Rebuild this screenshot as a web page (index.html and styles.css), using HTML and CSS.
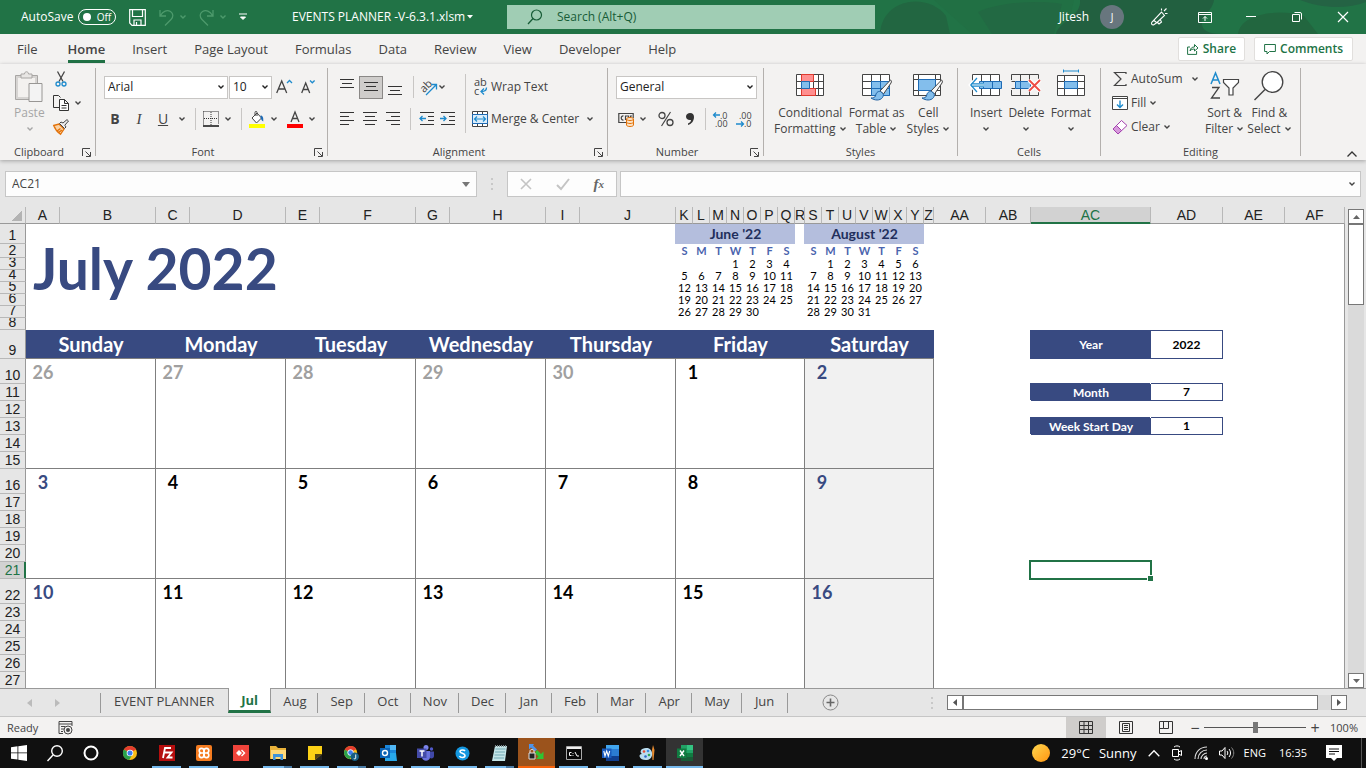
FILE: index.html
```html
<!DOCTYPE html>
<html lang="en">
<head>
<meta charset="utf-8">
<title>EVENTS PLANNER -V-6.3.1.xlsm</title>
<link rel="stylesheet" href="styles.css">
</head>
<body>
<svg class="defs" aria-hidden="true">
  <symbol id="chev" viewBox="0 0 8 8"><path d="M1.5 2.5 4 5l2.500-2.500" fill="none" stroke="currentColor" stroke-width="1.400"/></symbol>
  <symbol id="launch" viewBox="0 0 9 9"><path d="M.5 8V.5H8M3.500 3.500l4.500 4.500M8.500 4v4.500H4" fill="none" stroke="#444"/></symbol>
  <symbol id="brush" viewBox="0 0 24 24"><path d="M22 2.500 12 13l3.500 3L23 5c1-2 0-3.500-1-2.500Z" fill="#f8f8f8" stroke="#444"/><path d="M12.500 13.500c-3-.5-4.500 1.500-5 4.500-.5 1.500-2.500 2-4.500 2 3.500 2.500 9 3 11.500-.5 1-1.500 1-3 .5-4Z" fill="#83beec" stroke="#1e5fa0"/></symbol>
</svg>
<header class="titlebar">
  <svg class="blobs" viewBox="0 0 486 34" preserveAspectRatio="none" aria-hidden="true"><path d="M0 34C2-2 48-8 66 16l4 18Z" fill="#226641"/><path d="M54 0h140l-8 34H92Z" fill="#217044"/><path d="M98 12c22-10 60-12 84-8l-8 30H112Z" fill="#226943"/><path d="M200 0h134c-2 12-12 14-12 24 0 6 6 10 20 10H176c2-12 26-18 24-34Z" fill="#226040"/><path d="M358 34c2-20 40-26 66-18l14 18Z" fill="#22663f"/><path d="M420 0c20 8 46 10 66 2V0Z" fill="#246344"/></svg>
  <div class="title-left">
    <label class="autosave" for="autosave">AutoSave</label>
    <button class="toggle" id="autosave" role="switch" aria-checked="false"><i></i>Off</button>
    <button class="tb save" aria-label="Save"><svg width="17" height="17" viewBox="0 0 17 17"><path d="M.7.7h15.600v15.600H3L.7 14ZM3.500.7v6.800h10V.7M5 16v-5h7v5M7.500 13v3" fill="none" stroke="#fff" stroke-width="1.200"/></svg></button>
    <button class="tb undo dim" aria-label="Undo"><svg width="15" height="17" viewBox="0 0 15 17"><path d="M1 1v6h6M1.500 6.500C4 2 8 .5 11.500 2.500c3 2 3 5.500.5 8L6 16.500" fill="none" stroke="currentColor" stroke-width="1.300"/></svg></button>
    <svg class="chev dim"><use href="#chev"/></svg>
    <button class="tb undo dim" aria-label="Redo"><svg width="15" height="17" viewBox="0 0 15 17"><path d="M14 1v6H8M13.500 6.500C11 2 7 .5 3.500 2.500c-3 2-3 5.500-.5 8l6 6" fill="none" stroke="currentColor" stroke-width="1.300"/></svg></button>
    <svg class="chev dim"><use href="#chev"/></svg>
    <button class="tb custom" aria-label="Customize toolbar"><svg width="8" height="8" viewBox="0 0 8 8"><path d="M0 1h8" stroke="#fff"/><path d="M1.500 4h5L4 6.500Z" fill="#fff" stroke="#fff"/></svg></button>
    <span class="docname">EVENTS PLANNER -V-6.3.1.xlsm</span>
    <svg class="caret" width="6" height="4" viewBox="0 0 6 4"><path d="M0 0h6L3 3.500Z" fill="#fff"/></svg>
  </div>
  <div class="search">
    <svg width="16" height="16" viewBox="0 0 16 16"><circle cx="9.500" cy="6" r="5" fill="none" stroke="#185c37" stroke-width="1.200"/><path d="M6 9.500 1 15" stroke="#185c37" stroke-width="1.300"/></svg>
    <input type="text" aria-label="Search" placeholder="Search (Alt+Q)">
  </div>
  <div class="title-right">
    <span class="user">Jitesh</span><span class="avatar">J</span>
    <button class="wb" aria-label="Coming soon"><svg width="18" height="18" viewBox="0 0 18 18"><path d="M11.500 4 14.500 7.500 7 14.500 3.500 17c-2 0-2.500-1.500-1.500-3ZM3.500 12l3.500 3M7.500 14.500l1.500 1.500 2.500-2-1-2M11.500.5v2M14 3l2.500-2.500M15 5.500h2.500" fill="none" stroke="#fff" stroke-width="1.100"/></svg></button>
    <button class="wb" aria-label="Ribbon display options"><svg width="14" height="11" viewBox="0 0 14 11"><path d="M.5.5h13v10H.5ZM.5 2.500h13M7 9V4.500M5 6.500l2-2 2 2" fill="none" stroke="#fff"/></svg></button>
    <button class="wb" aria-label="Minimize"><svg width="10" height="10" viewBox="0 0 10 10"><path d="M0 4.500h10" stroke="#fff"/></svg></button>
    <button class="wb" aria-label="Restore"><svg width="10" height="10" viewBox="0 0 10 10"><path d="M.5 2.500h7v7h-7ZM2.500.5H8q1.500 0 1.500 1.500v5.500" fill="none" stroke="#fff"/></svg></button>
    <button class="wb" aria-label="Close"><svg width="10" height="10" viewBox="0 0 10 10"><path d="m0 0 10 10M10 0 0 10" stroke="#fff" stroke-width="1.200"/></svg></button>
  </div>
</header>

<nav class="tabs">
  <a href="#file">File</a><a class="on" href="#home">Home</a><a href="#insert">Insert</a><a href="#layout">Page Layout</a><a href="#formulas">Formulas</a><a href="#data">Data</a><a href="#review">Review</a><a href="#view">View</a><a href="#developer">Developer</a><a href="#help">Help</a>
  <span class="grow"></span>
  <button class="pill"><svg width="12" height="12" viewBox="0 0 12 12"><path d="M3 4H.6v7.400h9V8M3 8c.5-3 2-4 4.500-4V1.500L11 5 7.500 8V6C5.500 6 4 6.500 3 8Z" fill="none" stroke="#217346"/></svg>Share</button>
  <button class="pill"><svg width="12" height="12" viewBox="0 0 12 12"><path d="M.6 1.500h10.800v7H5.500L3 11V8.500H.6Z" fill="none" stroke="#217346"/></svg>Comments</button>
</nav>

<section class="ribbon">
  <div class="group clipboard">
    <div class="body">
      <button class="big paste"><svg width="28" height="32" viewBox="0 0 28 32"><path d="M.5 4.500h22v24H.5Z" fill="#d6d4d2" stroke="#a8a6a4"/><path d="M3 7h17v19H3Z" fill="#f3f1ef"/><path d="M6 3h3.500c0-3 4-3 4 0H17v4H6Z" fill="#e8e6e4" stroke="#a8a6a4"/><path d="M14 12.500h13v18H14Z" fill="#f3f3f3" stroke="#989694"/></svg><span>Paste</span><svg class="chev"><use href="#chev"/></svg></button>
      <div class="stack">
        <button class="line" aria-label="Cut"><svg width="16" height="16" viewBox="0 0 16 16"><path d="m4.500.5 5.500 10M11.500.5 6 10.500" stroke="#444" stroke-width="1.300"/><circle cx="5" cy="13" r="2" fill="none" stroke="#1e8bcd" stroke-width="1.300"/><circle cx="11" cy="13" r="2" fill="none" stroke="#1e8bcd" stroke-width="1.300"/></svg></button>
        <button class="line" aria-label="Copy"><svg width="16" height="16" viewBox="0 0 16 16"><path d="M6 12.500H.5V.5h5l2 2" fill="none" stroke="#333"/><path d="M6.500 4.500h5l4 4v7h-9ZM11.500 4.500v4h4M8.500 10.500h5M8.500 13h5" fill="#fff" stroke="#333"/></svg><svg class="chev"><use href="#chev"/></svg></button>
        <button class="line" aria-label="Format painter"><svg width="16" height="16" viewBox="0 0 16 16"><path d="M.7 6.500 6 5l5 5-3.500 5.300C5 13.500 2 10 .7 6.500Z" fill="#fbd3a6" stroke="#e3730b" stroke-width="1.300"/><path d="M4 12l3.500-2.500M5.500 13.500 9 11" stroke="#e3730b" stroke-width="1.500" fill="none"/><path d="m6.500 4.500 5 5L13 8l-1.200-1.800 3.700-4.200L14 .6 10 4 8 3Z" fill="#eee" stroke="#444"/></svg></button>
      </div>
    </div>
    <div class="cap"><span>Clipboard</span><button class="launch" aria-label="Clipboard options"><svg width="9" height="9"><use href="#launch"/></svg></button></div>
  </div>

  <div class="group font">
    <div class="body rows">
      <div class="row">
        <div class="pick wide"><select aria-label="Font"><option>Arial</option></select><svg class="chev"><use href="#chev"/></svg></div>
        <div class="pick size"><select aria-label="Font size"><option>10</option></select><svg class="chev"><use href="#chev"/></svg></div>
        <button class="ib" aria-label="Increase font size"><svg width="17" height="16" viewBox="0 0 17 16"><path d="M.7 14 5.700 2l5 12M2.500 10h6.500" fill="none" stroke="#444" stroke-width="1.300"/><path d="m11 4 2.500-2.500L16 4" fill="none" stroke="#1e8bcd" stroke-width="1.300"/></svg></button>
        <button class="ib" aria-label="Decrease font size"><svg width="16" height="16" viewBox="0 0 16 16"><path d="m1.700 14 4-10 4 10M3.200 10.500h5" fill="none" stroke="#444" stroke-width="1.300"/><path d="m10 1.500 2.300 2.300 2.300-2.300" fill="none" stroke="#1e8bcd" stroke-width="1.300"/></svg></button>
      </div>
      <div class="row">
        <button class="ib b">B</button><button class="ib i">I</button><button class="ib u">U</button><button class="cv" aria-label="Underline options"><svg class="chev"><use href="#chev"/></svg></button><i class="sep"></i>
        <button class="sb" aria-label="Borders"><svg width="16" height="16" viewBox="0 0 16 16"><path d="M.5.5h15v13M.5.5v13M8 1v13M1 7.500h14" fill="none" stroke="#333" stroke-dasharray="1 1"/><path d="M0 15h16" stroke="#111" stroke-width="1.500"/></svg></button><button class="cv" aria-label="Border options"><svg class="chev"><use href="#chev"/></svg></button><i class="sep"></i>
        <button class="sb" aria-label="Fill color"><svg width="16" height="17" viewBox="0 0 16 17"><path d="m3 7 5-5 4.500 5-5 5ZM8 5V1.500c0-1.500-2-1.500-2 0V5" fill="#fff" stroke="#444"/><path d="M11.500 4.500c2.500 0 3 2.500 2.700 6-2-1-2.700-3-2.700-6Z" fill="#1e6bb5"/><path d="M0 13h16v4H0Z" fill="#ff0"/></svg></button><button class="cv" aria-label="Fill options"><svg class="chev"><use href="#chev"/></svg></button>
        <button class="sb" aria-label="Font color"><svg width="16" height="17" viewBox="0 0 16 17"><path d="m4 11 4-10 4 10M5.500 7.500h5" fill="none" stroke="#444" stroke-width="1.300"/><path d="M0 13h16v4H0Z" fill="#f00"/></svg></button><button class="cv" aria-label="Font color options"><svg class="chev"><use href="#chev"/></svg></button>
      </div>
    </div>
    <div class="cap"><span>Font</span><button class="launch" aria-label="Font options"><svg width="9" height="9"><use href="#launch"/></svg></button></div>
  </div>

  <div class="group align">
    <div class="body">
      <div class="rows">
        <div class="row">
          <button class="ib" aria-label="Top align"><svg width="14" height="16" viewBox="0 0 14 16"><path d="M0 .5h14M2 4.500h10M0 8.500h14" stroke="#333"/></svg></button>
          <button class="ib pressed" aria-label="Middle align"><svg width="14" height="16" viewBox="0 0 14 16"><path d="M0 3.500h14M2 7.500h10M0 11.500h14" stroke="#333"/></svg></button>
          <button class="ib" aria-label="Bottom align"><svg width="14" height="16" viewBox="0 0 14 16"><path d="M0 7.500h14M2 11.500h10M0 15.500h14" stroke="#333"/></svg></button>
          <i class="sep"></i>
          <button class="sb" aria-label="Orientation"><svg width="17" height="17" viewBox="0 0 17 17"><text x="-1" y="11" transform="rotate(-45 5 8)" font-family="Open Sans" font-size="11" fill="#444">ab</text><path d="m5 16 10-10M10.500 5.500H15.500v5" fill="none" stroke="#1e8bcd" stroke-width="1.300"/></svg></button><button class="cv" aria-label="Orientation options"><svg class="chev"><use href="#chev"/></svg></button>
        </div>
        <div class="row">
          <button class="ib" aria-label="Align left"><svg width="14" height="14" viewBox="0 0 14 14"><path d="M0 .5h14M0 4.500h9M0 8.500h14M0 12.500h9" stroke="#333"/></svg></button>
          <button class="ib" aria-label="Center"><svg width="14" height="14" viewBox="0 0 14 14"><path d="M0 .5h14M2 4.500h10M0 8.500h14M2 12.500h10" stroke="#333"/></svg></button>
          <button class="ib" aria-label="Align right"><svg width="14" height="14" viewBox="0 0 14 14"><path d="M0 .5h14M5 4.500h9M0 8.500h14M5 12.500h9" stroke="#333"/></svg></button>
          <i class="sep"></i>
          <button class="sb" aria-label="Decrease indent"><svg width="15" height="14" viewBox="0 0 15 14"><path d="M1 .5h14M9 4.500h6M9 8.500h6M1 12.500h14" stroke="#333"/><path d="M7 6.500H1M3.500 4 1 6.500 3.500 9" fill="none" stroke="#1e8bcd" stroke-width="1.300"/></svg></button>
          <button class="ib" aria-label="Increase indent"><svg width="15" height="14" viewBox="0 0 15 14"><path d="M1 .5h14M9 4.500h6M9 8.500h6M1 12.500h14" stroke="#333"/><path d="M0 6.500h6M3.500 4 6 6.500 3.500 9" fill="none" stroke="#1e8bcd" stroke-width="1.300"/></svg></button>
        </div>
      </div>
      <i class="sep tall"></i>
      <div class="rows">
        <div class="row"><button class="txt"><svg width="16" height="18" viewBox="0 0 16 18"><text x="2" y="8" font-family="Open Sans" font-size="11" fill="#444">ab</text><text x="2" y="17" font-family="Open Sans" font-size="11" fill="#444">c</text><path d="M14.500 9.500c0 3-2 4-5 4M12 10.500l-3 3 3 3" fill="none" stroke="#1e8bcd" stroke-width="1.300"/></svg>Wrap Text</button></div>
        <div class="row"><button class="txt"><svg width="16" height="16" viewBox="0 0 16 16"><path d="M.5.5h15v15H.5ZM5.500.5v3M10.500.5v3M5.500 13v2.500M10.500 13v2.500" fill="#fff" stroke="#444"/><path d="M.5 3.500h15v9H.5Z" fill="#dcedfa" stroke="#1e6bb5"/><path d="M3 8h10M5 5.500 2.500 8 5 10.500M11 5.500 13.500 8 11 10.500" fill="none" stroke="#1e8bcd" stroke-width="1.200"/></svg>Merge &amp; Center</button><button class="cv" aria-label="Merge options"><svg class="chev"><use href="#chev"/></svg></button></div>
      </div>
    </div>
    <div class="cap"><span>Alignment</span><button class="launch" aria-label="Alignment options"><svg width="9" height="9"><use href="#launch"/></svg></button></div>
  </div>

  <div class="group number">
    <div class="body rows">
      <div class="row"><div class="pick"><select aria-label="Number format"><option>General</option></select><svg class="chev"><use href="#chev"/></svg></div></div>
      <div class="row">
        <button class="sb" aria-label="Accounting format"><svg width="17" height="16" viewBox="0 0 17 16"><path d="M8 11.500H.8v-9h14.400V7M5.500 5c-3-.5-3 4.500 0 4M7.500 9V5h3v4M12.500 7V5H14" fill="none" stroke="#444" stroke-width="1.200"/><path d="M8.500 8v6c0 2 7 2 7 0V8c0-2-7-2-7 0Z" fill="#fce2c4" stroke="#e3730b"/><path d="M8.500 8c0 2 7 2 7 0M8.500 11c0 2 7 2 7 0" fill="none" stroke="#e3730b"/></svg></button><button class="cv" aria-label="Accounting options"><svg class="chev"><use href="#chev"/></svg></button>
        <button class="ib pc" aria-label="Percent"><svg width="16" height="16" viewBox="0 0 16 16"><circle cx="4" cy="4.500" r="3" fill="none" stroke="#444" stroke-width="1.300"/><circle cx="12" cy="11.500" r="3" fill="none" stroke="#444" stroke-width="1.300"/><path d="M12.500 1 3.500 15" stroke="#444" stroke-width="1.200"/></svg></button>
        <button class="ib" aria-label="Comma"><svg width="10" height="14" viewBox="0 0 10 14"><path d="M5 1c3 0 4 2 4 4 0 4-2.500 7-6 8v-1.500C5 10.500 6 9.500 6 8 3 8.500 1 7 1 4.500 1 2.500 3 1 5 1Z" fill="#333"/></svg></button>
        <i class="sep thin"></i>
        <button class="ib" aria-label="Increase decimal"><svg width="17" height="17" viewBox="0 0 17 17"><text x="8" y="8" font-family="Open Sans" font-size="9" fill="#444">.0</text><text x="3" y="16" font-family="Open Sans" font-size="9" fill="#444">.00</text><path d="M8 4H1.500M4 1.500 1.500 4 4 6.500" fill="none" stroke="#1e8bcd" stroke-width="1.300"/></svg></button>
        <button class="ib" aria-label="Decrease decimal"><svg width="17" height="17" viewBox="0 0 17 17"><text x="3" y="8" font-family="Open Sans" font-size="9" fill="#444">.00</text><text x="8" y="16" font-family="Open Sans" font-size="9" fill="#444">.0</text><path d="M0 13h7.500M5 10.500 7.500 13 5 15.500" fill="none" stroke="#1e8bcd" stroke-width="1.300"/></svg></button>
      </div>
    </div>
    <div class="cap"><span>Number</span><button class="launch" aria-label="Number options"><svg width="9" height="9"><use href="#launch"/></svg></button></div>
  </div>

  <div class="group styles">
    <div class="body">
      <button class="big"><svg width="28" height="28" viewBox="0 0 28 28"><path d="M.5 3.500h27v21H.5ZM.5 10.500h27M.5 17.500h27M5.500 3.500v21M17.500 3.500v21M22.500 3.500v21" fill="#fff" stroke="#444"/><path d="M5.500 3.500h12v7h-12ZM5.500 17.500h14v7h-14Z" fill="#ff8f8f" stroke="#e03a2f"/><path d="M5.500 10.500h8v7h-8Z" fill="#83beec" stroke="#1e6bb5"/></svg><span>Conditional<br>Formatting <svg class="chev"><use href="#chev"/></svg></span></button>
      <button class="big"><svg width="30" height="31" viewBox="0 0 30 31"><path d="M.5 3.500h27v21H.5ZM.5 10.500h27M.5 17.500h27M9.500 3.500v21M18.500 3.500v21" fill="#fff" stroke="#444"/><path d="M9.500 10.500h18v14h-18ZM9.500 17.500h18M18.500 10.500v14" fill="#83beec" stroke="#1e6bb5"/><use href="#brush" x="6" y="7" width="24" height="24"/></svg><span>Format as<br>Table <svg class="chev"><use href="#chev"/></svg></span></button>
      <button class="big"><svg width="30" height="31" viewBox="0 0 30 31"><path d="M.5 3.500h27v21H.5ZM.5 8.500h27M.5 19.500h27M5.500 3.500v21M22.500 3.500v21" fill="#fff" stroke="#444"/><path d="M5.500 8.500h17v11h-17Z" fill="#83beec" stroke="#1e6bb5"/><use href="#brush" x="6" y="7" width="24" height="24"/></svg><span>Cell<br>Styles <svg class="chev"><use href="#chev"/></svg></span></button>
    </div>
    <div class="cap"><span>Styles</span></div>
  </div>

  <div class="group cells">
    <div class="body">
      <button class="big"><svg width="32" height="28" viewBox="0 0 32 28"><path d="M2.500 3.500h27v21h-27ZM11.500 3.500v21M20.500 3.500v21" fill="#fff" stroke="#444"/><path d="M9.500 10.500h22v7h-22ZM13.500 10.500v7M22.500 10.500v7" fill="#83beec" stroke="#1e6bb5"/><path d="M7 7 .8 14 7 21M1 14h13" fill="none" stroke="#fff" stroke-width="4"/><path d="M7 7 .8 14 7 21M1 12.800h13M1 15.200h13" fill="none" stroke="#1e8bcd" stroke-width="1.200"/></svg><span>Insert</span><svg class="chev"><use href="#chev"/></svg></button>
      <button class="big"><svg width="30" height="28" viewBox="0 0 30 28"><path d="M.5 9V3.500h27V9M.5 19v5.500h27V20M9.500 3.500v21M18.500 3.500v21M.5 10.500H4M.5 17.500H4" fill="none" stroke="#444"/><path d="M4.500 10.500h15v7h-15ZM9.500 10.500v7" fill="#83beec" stroke="#1e6bb5"/><path d="m18 9 11 11M29 9 18 20" stroke="#fff" stroke-width="4"/><path d="m18 9 11 11M29 9 18 20" stroke="#ee4c45" stroke-width="1.800"/></svg><span>Delete</span><svg class="chev"><use href="#chev"/></svg></button>
      <button class="big"><svg width="28" height="28" viewBox="0 0 28 28"><path d="M.5 4.500h27v20H.5ZM.5 10.500h27M.5 17.500h27M7.500 4.500v20M20.500 4.500v20" fill="#fff" stroke="#444"/><path d="M7.500 10.500h13v7h-13Z" fill="#83beec" stroke="#1e6bb5"/><path d="M6.500 -1.500v3M21.500 -1.500v3M6.500 0h15" stroke="#1e8bcd"/></svg><span>Format</span><svg class="chev"><use href="#chev"/></svg></button>
    </div>
    <div class="cap"><span>Cells</span></div>
  </div>

  <div class="group editing">
    <div class="body">
      <div class="stack">
        <button class="line"><svg width="16" height="16" viewBox="0 0 16 16"><path d="M14 3V1.500H2.500L9 8l-6.500 6.500H14V13" fill="none" stroke="#444" stroke-width="1.200"/></svg>AutoSum<svg class="chev far"><use href="#chev"/></svg></button>
        <button class="line"><svg width="16" height="16" viewBox="0 0 16 16"><path d="M.5 1.500h15v13H.5ZM.5 3.500h15" fill="#fff" stroke="#444"/><path d="M8 5.500v7M5 9.500l3 3 3-3" fill="none" stroke="#1e8bcd" stroke-width="1.400"/></svg>Fill<svg class="chev"><use href="#chev"/></svg></button>
        <button class="line"><svg width="16" height="16" viewBox="0 0 16 16"><path d="m1 10 8.500-8.500L15 6.500 6 15Z" fill="#fff" stroke="#a33fae"/><path d="m1 10 3.500-3.500L9.500 11.500 6 15Z" fill="#d79bdc" stroke="#a33fae"/></svg>Clear<svg class="chev"><use href="#chev"/></svg></button>
      </div>
      <button class="big"><svg width="30" height="30" viewBox="0 0 30 30"><path d="m1 13 4.500-11L10 13M2.500 9h6" fill="none" stroke="#1e8bcd" stroke-width="1.500"/><path d="M2 16.500h7L1.500 27H10" fill="none" stroke="#444" stroke-width="1.300"/><path d="M13.500 8.500h15v3L23 17v7h-4v-7l-5.500-5.500Z" fill="#fff" stroke="#444" stroke-width="1.200"/></svg><span>Sort &amp;<br>Filter <svg class="chev"><use href="#chev"/></svg></span></button>
      <button class="big"><svg width="30" height="30" viewBox="0 0 30 30"><circle cx="18.500" cy="11" r="10.300" fill="#fff" stroke="#444" stroke-width="1.300"/><path d="m11 18.500-10.500 10.500" stroke="#444" stroke-width="1.400"/></svg><span>Find &amp;<br>Select <svg class="chev"><use href="#chev"/></svg></span></button>
    </div>
    <div class="cap"><span>Editing</span></div>
  </div>
  <button class="collapse" aria-label="Collapse ribbon"><svg width="10" height="6" viewBox="0 0 10 6"><path d="m.5 5.500 4.500-4.500 4.500 4.500" fill="none" stroke="#333" stroke-width="1.300"/></svg></button>
</section>

<section class="formula">
  <div class="namebox"><input type="text" aria-label="Name box" value="AC21"><svg width="8" height="5" viewBox="0 0 8 5"><path d="M0 0h8L4 5Z" fill="#777"/></svg></div>
  <i class="dots"></i>
  <div class="fx">
    <button aria-label="Cancel"><svg width="12" height="12" viewBox="0 0 12 12"><path d="m1 1 10 10M11 1 1 11" stroke="#c4c4c4" stroke-width="1.600"/></svg></button>
    <button aria-label="Enter"><svg width="14" height="12" viewBox="0 0 14 12"><path d="m1 7 4 4 8-10" fill="none" stroke="#c4c4c4" stroke-width="2"/></svg></button>
    <button class="fn" aria-label="Insert function">f<sub>x</sub></button>
  </div>
  <div class="fbar"><input type="text" aria-label="Formula bar"><svg class="chev"><use href="#chev"/></svg></div>
</section>

<main class="work">
  <div class="view">
  <table class="sheet">
    <colgroup><col class="rh"><col class="c34"><col class="c96"><col class="c34"><col class="c96"><col class="c34"><col class="c96"><col class="c34"><col class="c96"><col class="c34"><col class="c96"><col class="c17"><col class="c17"><col class="c17"><col class="c17"><col class="c17"><col class="c17"><col class="c17"><col class="c10"><col class="c17"><col class="c17"><col class="c17"><col class="c17"><col class="c17"><col class="c17"><col class="c17"><col class="c10"><col class="c52"><col class="c45"><col class="c120"><col class="c72"><col class="c62"><col></colgroup>
    <thead><tr><th class="corner"><i></i></th><th>A</th><th>B</th><th>C</th><th>D</th><th>E</th><th>F</th><th>G</th><th>H</th><th>I</th><th>J</th><th>K</th><th>L</th><th>M</th><th>N</th><th>O</th><th>P</th><th>Q</th><th>R</th><th>S</th><th>T</th><th>U</th><th>V</th><th>W</th><th>X</th><th>Y</th><th>Z</th><th>AA</th><th>AB</th><th class="sel">AC</th><th>AD</th><th>AE</th><th>AF</th></tr></thead>
    <tbody>
      <tr class="h20"><th>1</th><td class="month" colspan="10" rowspan="8">July 2022</td><td class="mini" colspan="7">June '22</td><td></td><td class="mini" colspan="7">August '22</td><td></td><td colspan="6"></td></tr>
      <tr class="h14 wk"><th>2</th><td>S</td><td>M</td><td>T</td><td>W</td><td>T</td><td>F</td><td>S</td><td></td><td>S</td><td>M</td><td>T</td><td>W</td><td>T</td><td>F</td><td>S</td><td></td><td colspan="6"></td></tr>
      <tr class="h12"><th><b>3</b></th><td></td><td></td><td></td><td>1</td><td>2</td><td>3</td><td>4</td><td></td><td></td><td>1</td><td>2</td><td>3</td><td>4</td><td>5</td><td>6</td><td></td><td colspan="6"></td></tr>
      <tr class="h12"><th><b>4</b></th><td>5</td><td>6</td><td>7</td><td>8</td><td>9</td><td>10</td><td>11</td><td></td><td>7</td><td>8</td><td>9</td><td>10</td><td>11</td><td>12</td><td>13</td><td></td><td colspan="6"></td></tr>
      <tr class="h12"><th><b>5</b></th><td>12</td><td>13</td><td>14</td><td>15</td><td>16</td><td>17</td><td>18</td><td></td><td>14</td><td>15</td><td>16</td><td>17</td><td>18</td><td>19</td><td>20</td><td></td><td colspan="6"></td></tr>
      <tr class="h12"><th><b>6</b></th><td>19</td><td>20</td><td>21</td><td>22</td><td>23</td><td>24</td><td>25</td><td></td><td>21</td><td>22</td><td>23</td><td>24</td><td>25</td><td>26</td><td>27</td><td></td><td colspan="6"></td></tr>
      <tr class="h12"><th><b>7</b></th><td>26</td><td>27</td><td>28</td><td>29</td><td>30</td><td></td><td></td><td></td><td>28</td><td>29</td><td>30</td><td>31</td><td></td><td></td><td></td><td></td><td colspan="6"></td></tr>
      <tr class="h12"><th><b>8</b></th><td colspan="22"></td></tr>
      <tr class="h29"><th>9</th><td class="dow" colspan="2">Sunday</td><td class="dow" colspan="2">Monday</td><td class="dow" colspan="2">Tuesday</td><td class="dow" colspan="2">Wednesday</td><td class="dow" colspan="2">Thursday</td><td class="dow" colspan="8">Friday</td><td class="dow" colspan="8">Saturday</td><td colspan="2"></td><td class="key">Year</td><td class="val">2022</td><td colspan="2"></td></tr>
      <tr class="h25"><th>10</th><td class="day old" colspan="2" rowspan="6"><p>26</p></td><td class="day old" colspan="2" rowspan="6"><p>27</p></td><td class="day old" colspan="2" rowspan="6"><p>28</p></td><td class="day old" colspan="2" rowspan="6"><p>29</p></td><td class="day old" colspan="2" rowspan="6"><p>30</p></td><td class="day" colspan="8" rowspan="6"><p>1</p></td><td class="day end sat" colspan="8" rowspan="6"><p>2</p></td><td colspan="6"></td></tr>
      <tr class="h17"><th>11</th><td colspan="2"></td><td class="key">Month</td><td class="val">7</td><td colspan="2"></td></tr>
      <tr class="h17"><th>12</th><td colspan="6"></td></tr>
      <tr class="h17"><th>13</th><td colspan="2"></td><td class="key">Week Start Day</td><td class="val">1</td><td colspan="2"></td></tr>
      <tr class="h17"><th>14</th><td colspan="6"></td></tr>
      <tr class="h17"><th>15</th><td colspan="6"></td></tr>
      <tr class="h25"><th>16</th><td class="day end" colspan="2" rowspan="6"><p>3</p></td><td class="day" colspan="2" rowspan="6"><p>4</p></td><td class="day" colspan="2" rowspan="6"><p>5</p></td><td class="day" colspan="2" rowspan="6"><p>6</p></td><td class="day" colspan="2" rowspan="6"><p>7</p></td><td class="day" colspan="8" rowspan="6"><p>8</p></td><td class="day end sat" colspan="8" rowspan="6"><p>9</p></td><td colspan="6"></td></tr>
      <tr class="h17"><th>17</th><td colspan="6"></td></tr>
      <tr class="h17"><th>18</th><td colspan="6"></td></tr>
      <tr class="h17"><th>19</th><td colspan="6"></td></tr>
      <tr class="h17"><th>20</th><td colspan="6"></td></tr>
      <tr class="h17"><th class="sel">21</th><td colspan="2"></td><td class="active"><i class="cursor"></i></td><td colspan="3"></td></tr>
      <tr class="h25"><th>22</th><td class="day end" colspan="2" rowspan="6"><p>10</p></td><td class="day" colspan="2" rowspan="6"><p>11</p></td><td class="day" colspan="2" rowspan="6"><p>12</p></td><td class="day" colspan="2" rowspan="6"><p>13</p></td><td class="day" colspan="2" rowspan="6"><p>14</p></td><td class="day" colspan="8" rowspan="6"><p>15</p></td><td class="day end sat" colspan="8" rowspan="6"><p>16</p></td><td colspan="6"></td></tr>
      <tr class="h17"><th>23</th><td colspan="6"></td></tr>
      <tr class="h17"><th>24</th><td colspan="6"></td></tr>
      <tr class="h17"><th>25</th><td colspan="6"></td></tr>
      <tr class="h17"><th>26</th><td colspan="6"></td></tr>
      <tr class="h17"><th>27</th><td colspan="6"></td></tr>
    </tbody>
  </table>
  </div>
  <div class="vscroll">
    <button aria-label="Scroll up"><svg width="7" height="4" viewBox="0 0 7 4"><path d="M0 4h7L3.500 0Z" fill="#666"/></svg></button>
    <div class="track"><i></i></div>
    <button aria-label="Scroll down"><svg width="7" height="4" viewBox="0 0 7 4"><path d="M0 0h7L3.500 4Z" fill="#666"/></svg></button>
  </div>
</main>

<nav class="sheets">
  <div class="arrows"><svg width="5" height="8" viewBox="0 0 5 8"><path d="M5 0v8L0 4Z" fill="#bbb"/></svg><svg width="5" height="8" viewBox="0 0 5 8"><path d="M0 0v8l5-4Z" fill="#bbb"/></svg></div>
  <a class="first" href="#planner">EVENT PLANNER</a><a class="on" href="#jul">Jul</a><a href="#aug">Aug</a><a href="#sep">Sep</a><a href="#oct">Oct</a><a href="#nov">Nov</a><a href="#dec">Dec</a><a href="#jan">Jan</a><a href="#feb">Feb</a><a href="#mar">Mar</a><a href="#apr">Apr</a><a href="#may">May</a><a href="#jun">Jun</a>
  <button class="add" aria-label="New sheet"><svg width="17" height="17" viewBox="0 0 17 17"><circle cx="8.500" cy="8.500" r="7.500" fill="none" stroke="#888"/><path d="M8.500 4.500v8M4.500 8.500h8" stroke="#666" stroke-width="1.600"/></svg></button>
  <span class="grow"></span>
  <i class="dots"></i>
  <div class="hscroll">
    <button aria-label="Scroll left"><svg width="4" height="7" viewBox="0 0 4 7"><path d="M4 0v7L0 3.500Z" fill="#555"/></svg></button>
    <div class="track"><i></i></div>
    <button aria-label="Scroll right"><svg width="4" height="7" viewBox="0 0 4 7"><path d="M0 0v7l4-3.500Z" fill="#555"/></svg></button>
  </div>
</nav>

<footer class="status">
  <span class="ready">Ready</span>
  <button class="macro" aria-label="Record macro"><svg width="15" height="14" viewBox="0 0 15 14"><path d="M5 12.500H1V.5h13V5M1 3h13M3 5.500h4M3 8h3M3 10.500h2" fill="none" stroke="#444"/><circle cx="10" cy="9" r="4" fill="none" stroke="#444"/><circle cx="10" cy="9" r="2" fill="#444"/></svg></button>
  <span class="grow"></span>
  <button class="vw on" aria-label="Normal view"><svg width="14" height="13" viewBox="0 0 14 13"><path d="M.5.5h13v12H.5ZM5 .5v12M9.500.5v12M.5 4.500h13M.5 8.500h13" fill="none" stroke="#333"/></svg></button>
  <button class="vw" aria-label="Page layout view"><svg width="14" height="13" viewBox="0 0 14 13"><path d="M.5.5h13v12H.5ZM3.500 2.500h7v8h-7ZM5 4.500h4M5 6.500h4M5 8.500h4" fill="none" stroke="#333"/></svg></button>
  <button class="vw" aria-label="Page break view"><svg width="14" height="13" viewBox="0 0 14 13"><path d="M.5.5h13v12H.5ZM4.500.5v7h5v-7M.5 7.500h4" fill="none" stroke="#333"/></svg></button>
  <button class="z" aria-label="Zoom out">−</button>
  <input class="zoom" type="range" aria-label="Zoom" min="0" max="100" value="50">
  <button class="z" aria-label="Zoom in">+</button>
  <span class="pct">100%</span>
</footer>

<footer class="taskbar">
  <button aria-label="Start"><svg width="16" height="16" viewBox="0 0 16 16"><path d="m0 2.200 6.500-.9v6.200H0ZM7.300 1.200 16 0v7.500H7.300ZM0 8.300h6.500v6.300L0 13.700ZM7.300 8.300H16V16l-8.700-1.200Z" fill="#fff"/></svg></button>
  <button aria-label="Search"><svg width="18" height="18" viewBox="0 0 18 18"><circle cx="10" cy="7" r="5.300" fill="none" stroke="#fff" stroke-width="1.400"/><path d="M6 11 .5 17" stroke="#fff" stroke-width="1.400"/></svg></button>
  <button aria-label="Cortana"><svg width="18" height="16" viewBox="0 0 18 16"><circle cx="7" cy="8" r="6.500" fill="none" stroke="#fff" stroke-width="2"/></svg></button>
  <button aria-label="Chrome"><svg width="14" height="14" viewBox="0 0 16 16"><circle cx="8" cy="8" r="8" fill="#f9bc15"/><path d="M8 8 1 4C4-1.500 12-1.500 15 4Z" fill="#e43d2f"/><path d="M1 4a8 8 0 0 0 6 12l3.500-6L8 8Z" fill="#2aa14c"/><circle cx="8" cy="8" r="3.800" fill="#fff"/><circle cx="8" cy="8" r="2.900" fill="#3b7ded"/></svg></button>
  <button class="run" aria-label="FileZilla"><svg width="16" height="16" viewBox="0 0 16 16"><path d="M0 0h16v16H0Z" fill="#b50e0e"/><path d="M4 13 6 3h6M5 7.500h4M8 7.500h4.500L8.500 12.500h5" fill="none" stroke="#fff" stroke-width="1.800"/></svg></button>
  <button class="run" aria-label="XAMPP"><svg width="16" height="16" viewBox="0 0 16 16"><rect width="16" height="16" rx="2" fill="#f57c20"/><path d="M7 8H5.500a2.300 2.300 0 1 1 2.300-2.500v5A2.300 2.300 0 1 1 5.500 8M9 8h1.500a2.300 2.300 0 1 0-2.300-2.500v5A2.300 2.300 0 1 0 10.500 8" fill="none" stroke="#fff" stroke-width="1.600"/></svg></button>
  <button aria-label="AnyDesk"><svg width="16" height="16" viewBox="0 0 16 16"><path d="M0 0h16v16H0Z" fill="#ef443b"/><path d="m3 8 3-3 3 3-3 3ZM9 4.500 12.500 8 9 11.500l-1-1L10.500 8 8 5.500Z" fill="#fff"/></svg></button>
  <button class="run multi" aria-label="File Explorer"><svg width="16" height="14" viewBox="0 0 16 14"><path d="M0 0h6l2 2h8v11H0Z" fill="#e9b23a"/><path d="M1 4h15v9H1Z" fill="#ffd978"/><path d="M3 14V8h10v6h-2.500v-3h-5v3Z" fill="#3f93d9"/></svg></button>
  <button class="run" aria-label="Sticky Notes"><svg width="14" height="14" viewBox="0 0 14 14"><path d="M0 0h14v14H0Z" fill="#fcd116"/><path d="M7 14V8h7Z" fill="#554515"/><path d="M14 8v6H7Z" fill="#222"/></svg></button>
  <button class="run multi" aria-label="Chrome profile"><svg width="15" height="15" viewBox="0 0 16 16"><circle cx="7" cy="7" r="7" fill="#f9bc15"/><path d="M7 7 .8 4C3-1 11-1.500 13 3.500Z" fill="#e43d2f"/><path d="M.8 4A7 7 0 0 0 6 14l3-5L7 7Z" fill="#2aa14c"/><circle cx="7" cy="7" r="3" fill="#3b7ded" stroke="#fff"/><circle cx="11.500" cy="11.500" r="4.500" fill="#155d83"/><path d="M12.500 9v4c0 1-2 1-2 0" fill="none" stroke="#fff"/></svg></button>
  <button class="run" aria-label="Outlook"><svg width="17" height="16" viewBox="0 0 17 16"><path d="M5 0h11v14H5Z" fill="#1a86d9"/><path d="M10 0h6v5h-6Z" fill="#50b7f5"/><path d="M5 8h11l1 8H5Z" fill="#28a8ea"/><path d="M0 3h10v10H0Z" fill="#0a62b5"/><circle cx="5" cy="8" r="2.500" fill="none" stroke="#fff" stroke-width="1.400"/></svg></button>
  <button class="run" aria-label="Teams"><svg width="17" height="16" viewBox="0 0 17 16"><circle cx="9" cy="2.500" r="2.500" fill="#7b83eb"/><circle cx="14.500" cy="4" r="1.700" fill="#5059c9"/><path d="M5 6h8v6c0 5-8 5-8 0Z" fill="#6a72dd"/><path d="M13 6.500h4V11c0 2-2 3-4 2Z" fill="#4048a8"/><path d="M0 3.500h9.500V13H0Z" fill="#444ba8"/><path d="M2.500 6h5M5 6v5.500" stroke="#fff" stroke-width="1.500"/></svg></button>
  <button class="run" aria-label="Skype"><svg width="15" height="15" viewBox="0 0 15 15"><circle cx="7.500" cy="7.500" r="7" fill="#1497e0"/><path d="M10 5C9 3.500 5 3.500 5 5.500s5 1.500 5 4-4.500 2.500-5.500.5" fill="none" stroke="#fff" stroke-width="1.600"/></svg></button>
  <button class="run multi" aria-label="Notepad"><svg width="15" height="16" viewBox="0 0 15 16"><path d="M3 1h12l-2 15H0Z" fill="#c5e5e8"/><path d="M3.500 4h10M3 7h10M2.500 10h10M2 13h10" stroke="#72a9b3"/><path d="M3 1h12" stroke="#7c8b8e" stroke-width="2" stroke-dasharray="1 1"/></svg></button>
  <button class="alert" aria-label="Remote session"><svg width="17" height="16" viewBox="0 0 17 16"><path d="m1 0 5 0-1 1.500 4 4-2 2-4-4-2 2Z" fill="#4e93e8"/><path d="m9 6 4 4 2.500-2.500V15H8l2.500-2.500L7 9Z" fill="#2fc332"/><path d="M2 9V7c0-2 4-2 4 0v2" fill="none" stroke="#eee"/><path d="M1 9h6v6H1Z" fill="#222" stroke="#ddd"/></svg></button>
  <button class="run" aria-label="Command Prompt"><svg width="16" height="14" viewBox="0 0 16 14"><path d="M.5.5h15v13H.5Z" fill="#090909" stroke="#aaa"/><path d="M1 2h14" stroke="#eee" stroke-width="2"/><path d="M5.500 6.500h-2v3h2M7 7v.8M7 9v.8M9 6l2 4h2" fill="none" stroke="#fff"/></svg></button>
  <button class="run" aria-label="Word"><svg width="17" height="16" viewBox="0 0 17 16"><path d="M4 0h13v16H4Z" fill="#2b7cd3"/><path d="M4 0h13v4H4Z" fill="#41a5ee"/><path d="M4 11h13v5H4Z" fill="#103f91"/><path d="M0 3.500h9.500V13H0Z" fill="#185abd"/><path d="m1.800 6 1.200 5 1.700-5 1.600 5 1.400-5" fill="none" stroke="#fff" stroke-width="1.100"/></svg></button>
  <button class="run" aria-label="Paint"><svg width="17" height="16" viewBox="0 0 17 16"><path d="M7 3c7-1 9 11 1 12-7 1-10-6-5-6C0 7 2 3 7 3Z" fill="#b9dcef"/><circle cx="5" cy="6.500" r="1.300" fill="#e74b35"/><circle cx="9" cy="6" r="1.300" fill="#3c8fe0"/><circle cx="10" cy="10" r="1.300" fill="#32a853"/><circle cx="6.500" cy="11.500" r="1.300" fill="#2b68c8"/><path d="m14 0 1.500 5-1 10h-1L13 5Z" fill="#ea8d31"/></svg></button>
  <button class="run current" aria-label="Excel"><svg width="16" height="16" viewBox="0 0 16 16"><path d="M4 0h12v16H4Z" fill="#21a366"/><path d="M10 0h6v5h-6Z" fill="#33c481"/><path d="M4 8h12v8H4Z" fill="#185c37"/><path d="M10 8h6v4h-6Z" fill="#107c41"/><path d="M0 3.500h9.500V13H0Z" fill="#107c41"/><path d="m3 5.500 4 5.500M7 5.500 3 11" stroke="#fff" stroke-width="1.400"/></svg></button>
  <span class="grow"></span>
  <svg class="sun" width="18" height="18" viewBox="0 0 18 18"><defs><linearGradient id="sg" x2="1" y2="1"><stop stop-color="#ffd84f"/><stop offset="1" stop-color="#ff9411"/></linearGradient></defs><circle cx="9" cy="9" r="9" fill="url(#sg)"/></svg>
  <span class="temp">29°C</span><span class="temp">Sunny</span>
  <div class="tray">
    <svg width="12" height="7" viewBox="0 0 12 7"><path d="m.7 6.300 5.300-5.500 5.300 5.500" fill="none" stroke="#fff" stroke-width="1.300"/></svg>
    <svg width="12" height="16" viewBox="0 0 12 16"><path d="M1.500 4.500h6v7h-6ZM7.500 7l3-1.500v5l-3-1.500M3 2c2-1.500 4-1.500 6 0M3 14c2 1.500 4 1.500 6 0" fill="none" stroke="#fff"/></svg>
    <svg width="14" height="14" viewBox="0 0 14 14"><path d="M1 13C1 6 6 1 13 1M4 13c0-5 4-9 9-9M7 13c0-3 3-6 6-6M10 13c0-2 1.500-3 3-3" fill="none" stroke="#ddd" stroke-width="1.100"/><circle cx="12.500" cy="12.500" r="1.500" fill="#fff"/></svg>
    <svg width="16" height="14" viewBox="0 0 16 14"><path d="M.5 5H3l3-3.500v11L3 9H.5ZM8 5c1 1 1 3 0 4M10 3c2 2.500 2 5.500 0 8" fill="none" stroke="#fff"/><path d="M12.500 1.500c3 3.500 3 7.500 0 11" fill="none" stroke="#888"/></svg>
  </div>
  <span class="lang">ENG</span><time>16:35</time>
  <button class="note" aria-label="Notifications"><svg width="16" height="16" viewBox="0 0 16 16"><path d="M0 0h16v13h-5l-3 3-3-3H0Z" fill="#fff"/><path d="M3 4h10M3 6.500h10M3 9h6" stroke="#101010"/></svg></button>
</footer>
</body>
</html>
```
FILE: styles.css
```css
* { box-sizing: border-box; }
body {
  margin: 0;
  height: 100vh;
  display: flex;
  flex-direction: column;
  overflow: hidden;
  font: 12px/16px "Open Sans", "Noto Sans", sans-serif;
  color: #444;
  background: #e6e6e6;
}
button, input, select { font: inherit; color: inherit; border: 0; padding: 0; margin: 0; background: none; border-radius: 0; outline: 0; }
button { display: flex; align-items: center; justify-content: center; white-space: nowrap; }
a { color: inherit; text-decoration: none; }
svg { flex: none; display: block; overflow: visible; }
.defs { position: absolute; width: 0; height: 0; }
.grow { flex: 1; }
.chev { width: 8px; height: 8px; color: #444; }

/* Title bar */
.titlebar { position: relative; flex: none; height: 34px; display: flex; align-items: center; background: #217346; color: #fff; }
.blobs { position: absolute; right: 0; top: 0; width: 486px; height: 34px; overflow: hidden; }
.title-left { flex: none; width: 507px; padding-left: 21px; display: flex; align-items: center; }
.autosave { width: 57px; }
.toggle { width: 38px; height: 16px; border: 1px solid #fff; border-radius: 8px; font-size: 10px; gap: 6px; }
.toggle i { width: 8px; height: 8px; border-radius: 50%; background: #fff; }
.save { margin: 0 12px 0 13px; }
.undo { width: 16px; margin-right: 5px; }
.undo + .chev { margin-right: 11px; }
.titlebar .dim { color: #4d9a6c; }
.custom { margin: 0 45px 0 1px; }
.docname { white-space: nowrap; }
.caret { margin-left: 2px; }
.search { position: relative; flex: 1; height: 24px; display: flex; align-items: center; gap: 14px; padding-left: 20px; background: #a0cdb4; color: #185c37; }
.search input { flex: 1; min-width: 0; }
.search input::placeholder { color: #185c37; opacity: 1; }
.title-right { position: relative; flex: none; width: 491px; display: flex; align-items: center; justify-content: flex-end; }
.avatar { width: 24px; height: 24px; margin: 0 12px 0 11px; border-radius: 50%; background: #68767e; font-size: 10px; line-height: 24px; text-align: center; }
.wb { width: 46px; height: 34px; }

/* Ribbon tabs */
.tabs { flex: none; height: 30px; display: flex; align-items: center; gap: 27px; padding: 0 13px 0 17px; background: #f3f2f1; font-size: 13px; }
.tabs a { height: 28px; line-height: 28px; white-space: nowrap; }
.tabs .on { margin-left: 3px; font-weight: 600; border-bottom: 3px solid #217346; }
.pill { height: 24px; padding: 0 8px; gap: 4px; background: #fff; border: 1px solid #e1dfdd; border-radius: 2px; color: #217346; font-size: 12px; font-weight: 600; }
.pill + .pill { margin-left: -18px; padding: 0 9px; }

/* Ribbon */
.ribbon { position: relative; z-index: 1; flex: none; height: 96px; display: flex; padding-top: 4px; background: #f3f2f1; box-shadow: 0 1px 4px rgba(0, 0, 0, .3); }
.group { flex: none; display: flex; flex-direction: column; background: linear-gradient(#b3b0ad, #b3b0ad) right top / 1px 88px no-repeat; padding-right: 1px; }
.group .body { flex: 1; display: flex; padding: 3px 8px 0; }
.group .rows { display: flex; flex-direction: column; gap: 8px; }
.group .body.rows { padding-top: 7px; }
.group .body > .rows { padding-top: 4px; }
.row { height: 24px; display: flex; align-items: center; }
.cap { height: 16px; display: flex; }
.cap span { flex: 1; text-align: center; font-size: 11px; }
.launch { width: 17px; }
.clipboard { width: 96px; }
.font { width: 232px; }
.align { width: 280px; }
.number { width: 156px; }
.styles { width: 194px; }
.cells { width: 143px; }
.editing { width: 200px; }
.big { display: grid; grid-template-rows: 34px auto; align-content: start; align-items: start; justify-items: center; line-height: 16px; height: 70px; }
.big span .chev { display: inline-block; }
.big > .chev { margin-top: 4px; }
.paste, .paste .chev { color: #a6a6a6; }
.clipboard .body { padding-left: 14px; gap: 8px; }
.stack { display: flex; flex-direction: column; margin-top: -4px; }
.line { height: 24px; justify-content: flex-start; gap: 3px; }
.clipboard .chev { margin-left: 2px; }
.pick { flex: 1; display: grid; grid-template-columns: 1fr 14px; align-items: center; height: 23px; background: #fff; border: 1px solid #c8c6c4; color: #222; }
.pick select { grid-area: 1 / 1 / 2 / 3; width: 100%; height: 21px; padding-left: 3px; appearance: none; }
.pick .chev { grid-area: 1 / 2; pointer-events: none; color: #222; margin-left: 4px; }
.pick.wide { flex: 0 0 124px; margin: 0 1px; }
.pick.size { flex: 0 0 43px; }
.ib { width: 24px; height: 24px; }
.sb { width: 20px; height: 24px; }
.cv { width: 14px; height: 24px; }
.b { font-weight: 700; font-size: 14px; }
.i { font: italic 15px "Liberation Serif", serif; }
.u { font-size: 14px; text-decoration: underline; }
.font .body { padding: 7px 4px 0 7px; }
.font .cv + .sb { margin-left: 4px; }
.sep { width: 12px; height: 22px; background: linear-gradient(#c8c6c4, #c8c6c4) center / 1px 100% no-repeat; }
.sep.thin { width: 6px; }
.sep.tall { height: 59px; margin-top: 3px; width: 14px; }
.pressed { width: 24px; height: 23px; background: #cfcdcb; border: 1px solid #8a8886; }
.align .body { padding: 3px 6px 0 7px; }
.align .row { width: 124px; }
.align .sep.tall + .rows .row { width: 130px; }
.align .row .sb + .cv { margin-left: -4px; }
.txt { gap: 3px; margin-left: 1px; }
.txt + .cv { margin-left: 4px; }
.number .body { padding-right: 6px; }
.number .pc { margin-left: 4px; }
.styles .body { padding: 3px 10px 0; gap: 2px; }
.cells .body { padding: 3px 9px 0 12px; justify-content: space-between; }
.editing .body { padding: 3px 7px 0 11px; gap: 3px; }
.editing .stack { width: 90px; }
.line .far { margin-left: 5px; }
.collapse { width: 14px; height: 12px; margin: auto 7px 0 auto; }

/* Formula bar */
.formula { flex: none; height: 47px; display: flex; align-items: flex-start; padding: 11px 5px 0; }
.namebox, .fx, .fbar { height: 26px; display: flex; align-items: center; background: #fdfdfd; border: 1px solid #c6c6c6; }
.namebox { width: 472px; padding: 0 6px; }
.namebox input { flex: 1; }
.dots { width: 30px; height: 26px; background: radial-gradient(circle, #aaa 1px, transparent 1px) center / 30px 5px; clip-path: inset(6px 0); }
.fx { width: 110px; justify-content: space-around; }
.fn { font: italic 700 15px "Liberation Serif", serif; color: #666; }
.fn sub { font-size: 11px; vertical-align: -2px; }
.fbar { flex: 1; margin-left: 3px; padding-right: 4px; }
.fbar input { flex: 1; }

/* Worksheet */
.work { flex: 1; min-height: 0; display: flex; border-bottom: 1px solid #999; }
.view { flex: 1; min-width: 0; overflow: hidden; }
.sheet { width: 100%; table-layout: fixed; border-collapse: separate; border-spacing: 0; background: #fff; }
.rh { width: 26px; }
.c34 { width: 34px; }
.c96 { width: 96px; }
.c17 { width: 17px; }
.c10 { width: 10px; }
.c52 { width: 52px; }
.c45 { width: 45px; }
.c120 { width: 120px; }
.c72 { width: 72px; }
.c62 { width: 62px; }
.sheet th, .sheet td { padding: 0; overflow: hidden; }
.sheet th { font: 14px/15px "Liberation Sans", Arial, sans-serif; color: #222; background: #e6e6e6; border-right: 1px solid #b8b8b8; border-bottom: 1px solid #b8b8b8; vertical-align: bottom; white-space: nowrap; }
.sheet thead th { height: 17px; line-height: 16px; border-bottom-color: #999; text-align: center; }
.sheet thead .sel { background: #d2d2d2; color: #217346; border-bottom-color: #217346; box-shadow: inset 0 -1px #217346; }
.sheet tbody th { border-right-color: #999; }
.sheet tbody .sel { background: #d2d2d2; color: #217346; border-right-color: #217346; box-shadow: inset -1px 0 #217346; }
.corner i { display: block; width: 10px; height: 10px; margin: 0 3px 2px auto; background: linear-gradient(135deg, transparent 50%, #b3b3b3 50%); }
.sheet th b { display: flex; justify-content: center; align-items: flex-end; height: 11px; overflow: hidden; font-weight: 400; line-height: 13px; }
.sheet tbody tr > :last-child { border-right: 1px solid #999; }
.h20 { height: 20px; }
.h14 { height: 14px; }
.h14 th { line-height: 13px; }
.h12 { height: 12px; }
.h29 { height: 29px; }
.h25 { height: 25px; }
.h17 { height: 17px; }
.h12 td, .wk td { font: 11px/12px Lato, sans-serif; color: #000; text-align: center; }
.wk td { font-weight: 700; color: #4a64ad; }
.sheet .month { padding: 4px 0 0 7px; vertical-align: top; font: 700 57px/80px Lato, sans-serif; color: #384a81; }
.mini { font: 700 14px/18px Lato, sans-serif; color: #222f5c; background: #b4bedd; box-shadow: -1px 0 #b4bedd; text-align: center; }
.dow { font: 700 20px/24px Lato, sans-serif; color: #fff; background: #384a81; border-bottom: 1px solid #7f7f7f; text-align: center; }
.day { font: 700 18px/26px Lato, sans-serif; color: #000; vertical-align: top; border-right: 1px solid #7f7f7f; border-bottom: 1px solid #7f7f7f; }
.day p { width: 34px; margin: 0; text-align: center; }
.old { color: #a0a0a0; }
.end { color: #384a81; }
.sat { background: #f1f1f1; }
.key, .val { font: 700 12px/14px Lato, sans-serif; text-align: center; border: 1px solid #384a81; }
.key { color: #fff; background: #384a81; box-shadow: -1px -1px #384a81; }
.val { color: #000; border-left: 0; border-top: 0; box-shadow: 0 -1px #384a81; }
.h29 .key { box-shadow: -1px 0 #384a81; }
.h29 .val { border-top: 1px solid #384a81; box-shadow: none; }
.sheet .active { position: relative; overflow: visible; }
.cursor { position: absolute; inset: -2px -1px -1px -2px; border: 2px solid #217346; }
.cursor::after { content: ""; position: absolute; right: -3px; bottom: -3px; width: 5px; height: 5px; background: #217346; outline: 1px solid #fff; }
.vscroll { flex: none; width: 21px; padding: 2px 2px 0 3px; display: flex; flex-direction: column; }
.vscroll button, .hscroll button { flex: none; width: 16px; height: 15px; background: #fff; border: 1px solid #777; }
.track { flex: 1; background: #dadada; }
.track i { display: block; background: #fff; border: 1px solid #777; }
.vscroll .track i { height: 81px; }

/* Sheet tabs */
.sheets { flex: none; height: 28px; display: flex; align-items: stretch; border-bottom: 1px solid #c6c6c6; padding-right: 19px; font-size: 13px; }
.arrows { width: 100px; display: flex; align-items: center; padding-left: 27px; gap: 23px; }
.sheets a { position: relative; min-width: 46px; padding: 0 12px; line-height: 25px; text-align: center; white-space: nowrap; }
.sheets a::after, .first::before { content: ""; position: absolute; right: 0; top: 4px; width: 1px; height: 20px; background: #999; }
.sheets .first { padding: 0 14px; }
.first::before { right: auto; left: 0; }
.sheets .first::after, .sheets .on::after { display: none; }
.sheets .on { min-width: 43px; background: #fff; color: #217346; font-weight: 700; border-bottom: 3px solid #217346; margin: -1px 0 3px; height: 25px; border-left: 1px solid #999; border-right: 1px solid #999; }
.add { margin-left: 34px; }
.sheets .dots { align-self: center; }
.hscroll { display: flex; width: 400px; align-self: center; }
.hscroll .track { padding-right: 13px; }
.hscroll .track i { height: 15px; }

/* Status bar */
.status { flex: none; height: 21px; display: flex; align-items: center; background: #f3f2f1; font-size: 11px; padding-right: 8px; }
.ready { width: 58px; padding-left: 7px; }
.vw { width: 40px; height: 21px; }
.vw.on { background: #cfcdcb; }
.z { width: 18px; font-size: 16px; }
.zoom { width: 102px; height: 12px; appearance: none; background: linear-gradient(#555, #555) center / 100% 1px no-repeat; }
.zoom::-webkit-slider-thumb { appearance: none; width: 5px; height: 11px; background: #777; }
.pct { width: 34px; text-align: right; }

/* Taskbar */
.taskbar { flex: none; height: 30px; display: flex; align-items: center; background: #101010; color: #fff; padding-right: 4px; }
.taskbar button { position: relative; width: 37px; height: 30px; }
.run::after { content: ""; position: absolute; bottom: 0; left: 4px; right: 4px; height: 2px; background: #76b9ed; }
.multi::after { border-right: 8px solid #4a7ba5; }
.current { background: #333; }
.current::after { left: 0; right: 0; }
.taskbar .alert { background: #9b531c; border-bottom: 2px solid #f7630c; }
.sun { margin-right: 11px; }
.temp { font-size: 13px; margin-right: 9px; }
.tray { display: flex; align-items: center; gap: 11px; margin: 0 9px 0 2px; }
.lang, time { font-size: 11px; }
.lang { margin-right: 13px; }
.taskbar .note { margin-left: 9px; border-right: 1px solid #555; padding-right: 10px; width: 46px; }
```
